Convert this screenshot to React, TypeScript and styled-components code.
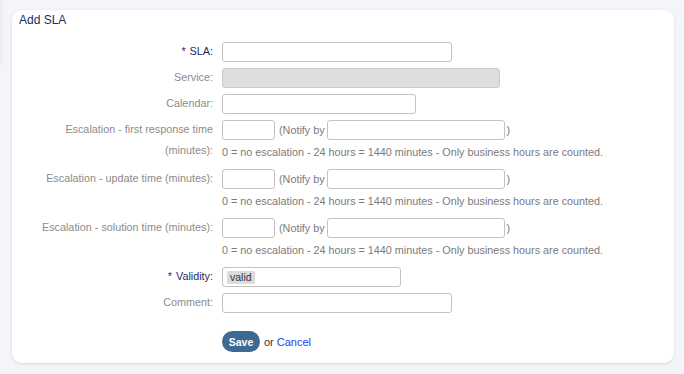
import React from 'react';
import styled, { createGlobalStyle } from 'styled-components';

const GlobalStyle = createGlobalStyle`
  html, body {
    margin: 0;
    padding: 0;
    background: #f4f5f8;
    font-family: "Liberation Sans", Arial, sans-serif;
  }
`;

const Page = styled.div`
  display: flex;
  align-items: flex-start;
  padding-top: 10px;
  width: 684px;
  height: 374px;
  box-sizing: border-box;
  overflow: hidden;
`;

const SideStub = styled.div`
  width: 2px;
  height: 64px;
  margin-top: -10px;
  margin-right: 10px;
  background: #eceef3;
  border-radius: 0 0 3px 0;
  box-shadow: 0 1px 2px rgba(40, 50, 90, 0.08);
`;

const Card = styled.section`
  width: 662px;
  height: 353px;
  box-sizing: border-box;
  background: #fff;
  border-radius: 10px;
  box-shadow: 0 1px 3px rgba(40, 50, 90, 0.14);
  padding: 3px 0 0 0;
`;

const Title = styled.h2`
  margin: 0;
  padding: 0 7px;
  font-size: 12px;
  line-height: 15px;
  font-weight: normal;
  color: #1f2b5e;
`;

const Form = styled.div`
  display: grid;
  grid-template-columns: 180px 1fr;
  column-gap: 9px;
  row-gap: 6px;
  padding: 14px 0 0 21px;
`;

const Label = styled.label<{ $required?: boolean }>`
  text-align: right;
  font-size: 10.8px;
  line-height: 21px;
  margin: -1px 0 -1px 0;
  color: ${(p) => (p.$required ? '#1f2b5e' : '#8b8b8b')};
`;

const Star = styled.span`
  margin-right: 4px;
`;

const Field = styled.div`
  display: flex;
  flex-direction: column;
  align-items: flex-start;
`;

const Line = styled.div`
  display: flex;
  align-items: center;
  height: 20px;
  font-size: 10.8px;
  color: #7a7a7a;
`;

const TextInput = styled.div<{ $width: number; $disabled?: boolean }>`
  width: ${(p) => p.$width}px;
  height: 20px;
  box-sizing: border-box;
  border: 1px solid ${(p) => (p.$disabled ? '#cbcbcb' : '#c2c2c2')};
  border-radius: 3px;
  background: ${(p) => (p.$disabled ? '#dedede' : '#fff')};
  display: flex;
  align-items: center;
  padding: 0 4px;
`;

const Notify = styled.span`
  margin: 0 2px 0 4px;
`;

const Paren = styled.span`
  margin-left: 2px;
`;

const Hint = styled.div`
  margin: 2px 0 1px 0;
  font-size: 10.8px;
  line-height: 20px;
  color: #7a7a7a;
`;

const Chip = styled.span`
  background: #dcdcdc;
  color: #333;
  font-size: 10.5px;
  line-height: 13px;
  padding: 0 3px;
  border-radius: 1px;
`;

const Actions = styled.div`
  grid-column: 2;
  margin-top: 12px;
  display: flex;
  align-items: center;
  font-size: 11px;
  color: #333;
`;

const SaveButton = styled.button`
  width: 38px;
  height: 21px;
  border: none;
  border-radius: 11px;
  background: #3c6a92;
  color: #fff;
  font-family: inherit;
  font-size: 10.5px;
  font-weight: bold;
  padding: 0;
  margin-right: 4px;
`;

const CancelLink = styled.a`
  color: #1a3df0;
  text-decoration: none;
  margin-left: 3px;
`;

const HINT = '0 = no escalation - 24 hours = 1440 minutes - Only business hours are counted.';

const EscalationField = () => (
  <Field>
    <Line>
      <TextInput $width={53} />
      <Notify>(Notify by</Notify>
      <TextInput $width={178} />
      <Paren>)</Paren>
    </Line>
    <Hint>{HINT}</Hint>
  </Field>
);

export default function App() {
  return (
    <>
      <GlobalStyle />
      <Page>
        <SideStub />
        <Card>
          <Title>Add SLA</Title>
          <Form>
            <Label $required>
              <Star>*</Star>SLA:
            </Label>
            <Field>
              <TextInput $width={230} />
            </Field>

            <Label>Service:</Label>
            <Field>
              <TextInput $width={278} $disabled />
            </Field>

            <Label>Calendar:</Label>
            <Field>
              <TextInput $width={194} />
            </Field>

            <Label>Escalation - first response time (minutes):</Label>
            <EscalationField />

            <Label>Escalation - update time (minutes):</Label>
            <EscalationField />

            <Label>Escalation - solution time (minutes):</Label>
            <EscalationField />

            <Label $required>
              <Star>*</Star>Validity:
            </Label>
            <Field>
              <TextInput $width={179}>
                <Chip>valid</Chip>
              </TextInput>
            </Field>

            <Label>Comment:</Label>
            <Field>
              <TextInput $width={230} />
            </Field>

            <Actions>
              <SaveButton>Save</SaveButton>
              or
              <CancelLink href="#">Cancel</CancelLink>
            </Actions>
          </Form>
        </Card>
      </Page>
    </>
  );
}
